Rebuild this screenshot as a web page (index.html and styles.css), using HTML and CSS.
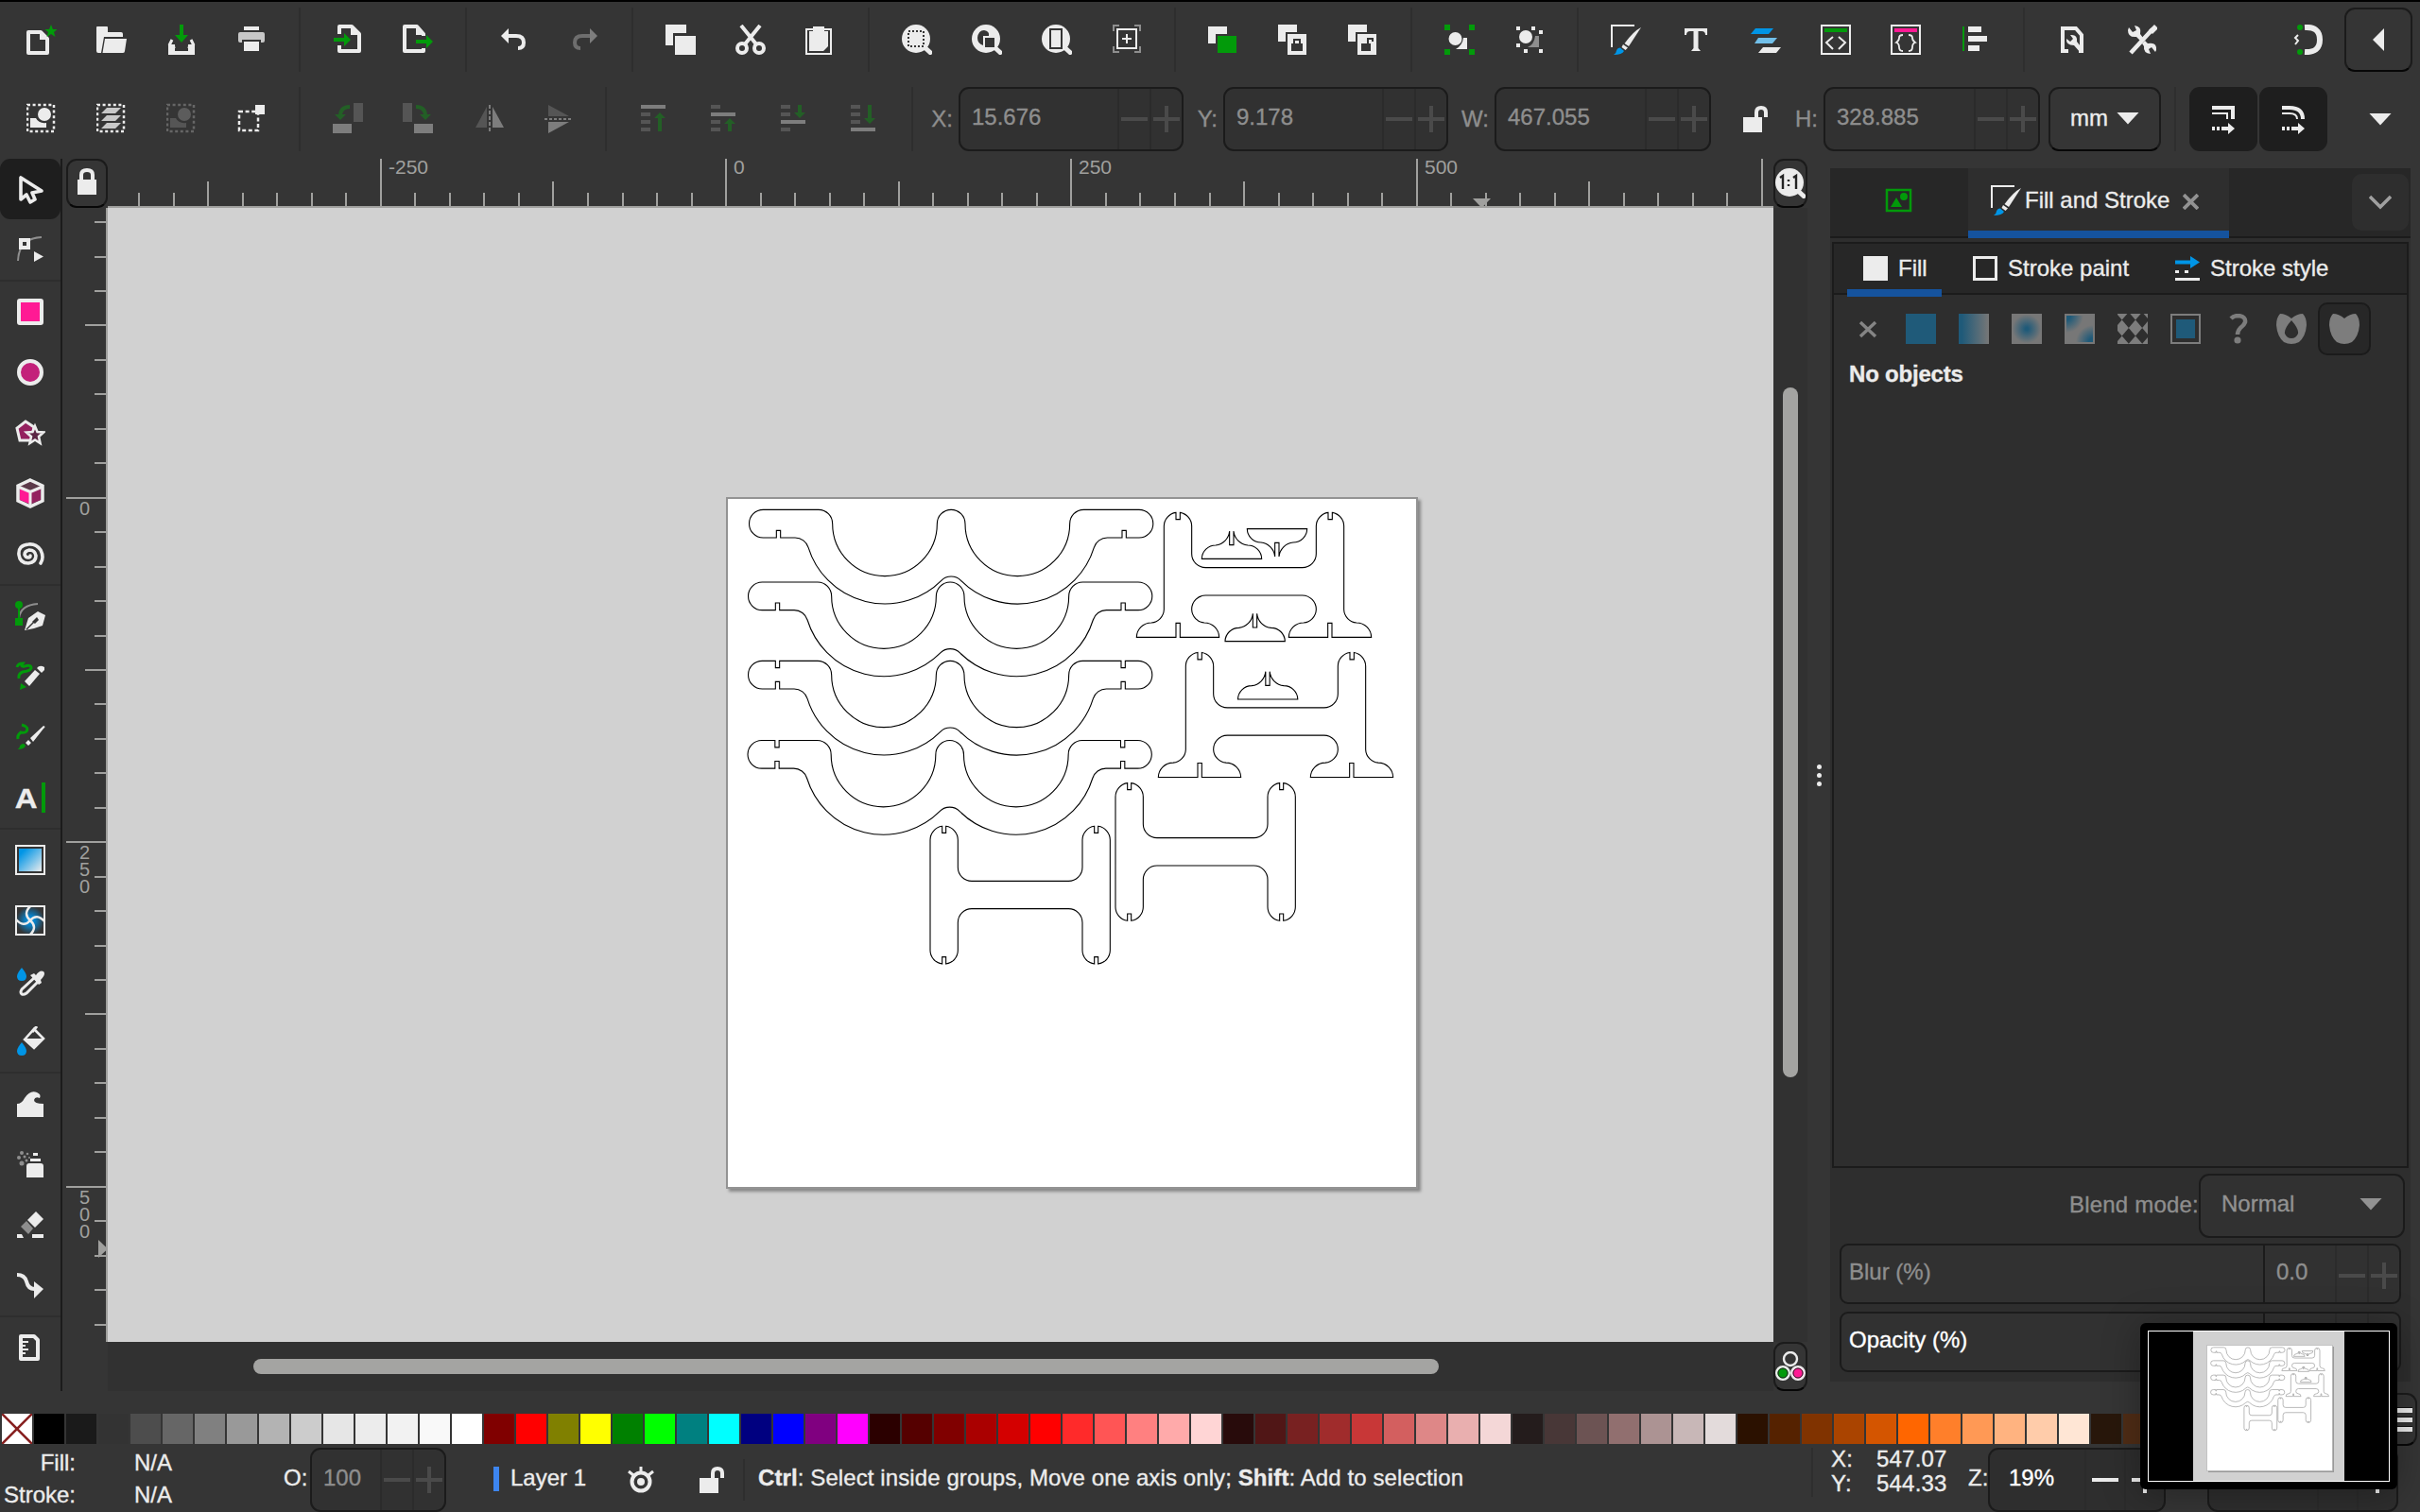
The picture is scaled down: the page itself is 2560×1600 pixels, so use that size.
FILE: index.html
```html
<!DOCTYPE html>
<html lang="en">
<head>
<meta charset="utf-8">
<title>Drawing - Inkscape</title>
<link rel="stylesheet" href="styles.css">
</head>
<body>
<svg class="defs" width="0" height="0" aria-hidden="true">
  <defs>
    <path id="wave" d="M44 0H220A44 45 0 0 1 264 45A166 166 0 0 0 596 45A44.5 45 0 0 1 685 45A166 166 0 0 0 1017 45A44 45 0 0 1 1061 0H1237A44.5 44.5 0 0 1 1237 89H1196V66H1183V89H1136A44 44 0 0 0 1094 120A254 254 0 0 1 671.6 224.8A44 44 0 0 0 609.4 224.8A254 254 0 0 1 187.3 120A44 44 0 0 0 145.3 89H99V66H86V89H44A44.5 44.5 0 0 1 44 0Z"/>
    <path id="wave-notched" d="M44 0H86V22H99V0H220A44 45 0 0 1 264 45A166 166 0 0 0 596 45A44.5 45 0 0 1 685 45A166 166 0 0 0 1017 45A44 45 0 0 1 1061 0H1183V22H1196V0H1237A44.5 44.5 0 0 1 1237 89H1196V66H1183V89H1136A44 44 0 0 0 1094 120A254 254 0 0 1 671.6 224.8A44 44 0 0 0 609.4 224.8A254 254 0 0 1 187.3 120A44 44 0 0 0 145.3 89H99V66H86V89H44A44.5 44.5 0 0 1 44 0Z"/>
    <path id="brace" d="M0 44A44 44 0 0 1 38 0V21H50V0A44 44 0 0 1 88 44V130A44 44 0 0 0 132 174H439A44 44 0 0 0 483 130V44A44 44 0 0 1 521 0V21H533V0A44 44 0 0 1 571 44V393A44 44 0 0 1 533 437V415H521V437A44 44 0 0 1 483 393V306A44 44 0 0 0 439 262H132A44 44 0 0 0 88 306V393A44 44 0 0 1 50 437V415H38V437A44 44 0 0 1 0 393Z"/>
    <path id="stand" d="M87 44A44 44 0 0 1 125 0V22H138V0A44 44 0 0 1 175 44V131A44 44 0 0 0 219 175H526A44 44 0 0 0 570 131V44A44 44 0 0 1 608 0V22H621V0A44 44 0 0 1 658 44V308A44 44 0 0 0 698 350A47 47 0 0 1 745 396H620V351H607V396H483A47 47 0 0 1 530 350A44 44 0 0 0 570 308A44.5 44.5 0 0 0 526 263H219A44.5 44.5 0 0 0 175 308A44 44 0 0 0 215 350A47 47 0 0 1 262 396H138V351H125V396H0A47 47 0 0 1 47 350A44 44 0 0 0 87 308Z"/>
    <path id="foot" d="M0 88A44 44 0 0 1 44 45A50 50 0 0 0 88 0V44H101V0A50 50 0 0 0 146 45A44 44 0 0 1 190 88Z"/>
    <g id="parts">
      <use href="#wave" x="98" y="58"/>
      <use href="#wave" x="95" y="288"/>
      <use href="#wave-notched" x="95" y="538"/>
      <use href="#wave-notched" x="93.5" y="790.5"/>
      <use href="#brace" x="672" y="1063"/>
      <use href="#brace" x="1260" y="926"/>
      <use href="#stand" x="1327" y="67"/>
      <use href="#stand" x="1396" y="511.500"/>
      <use href="#foot" x="1534" y="126"/>
      <use href="#foot" x="1608" y="388"/>
      <use href="#foot" x="1648.500" y="572"/>
      <use href="#foot" transform="translate(1678 207) scale(1 -1)"/>
    </g>
    <linearGradient id="g-lin" x1="0" y1="0" x2="1" y2="1"><stop offset="0.15" stop-color="#0095e6"/><stop offset="1" stop-color="#ececec"/></linearGradient>
    <radialGradient id="g-mesh"><stop offset="0" stop-color="#0095e6"/><stop offset="0.35" stop-color="#0a7fc4"/><stop offset="1" stop-color="#353535"/></radialGradient>
    <linearGradient id="p-lin"><stop offset="0.1" stop-color="#1f5a79"/><stop offset="1" stop-color="#777"/></linearGradient>
    <radialGradient id="p-rad"><stop offset="0.1" stop-color="#1f5a79"/><stop offset="0.95" stop-color="#777"/></radialGradient>
    <radialGradient id="p-corner"><stop offset="0.25" stop-color="#1f5a79"/><stop offset="1" stop-color="#777"/></radialGradient>
    <path id="diamond" d="M0 -8.400L7.200 0L0 8.400L-7.200 0Z"/>
    <symbol id="i-brush" viewBox="0 0 32 32"><path d="M1 24V1H25" fill="none" stroke="#ececec" stroke-width="2"/><path d="M32 3L19 23L14.500 20Q24 7 32 3Z" fill="#ececec"/><path d="M13 21L18 24.500L15.500 27L11.500 24Z" fill="#ececec"/><path d="M10 24.500L14 28Q12 32 3 32Q6 30 6 27.500Q7 24.500 10 24.500Z" fill="#0095e6"/></symbol>
    <symbol id="i-zoom" viewBox="0 0 32 32"><ellipse cx="15" cy="15" rx="15" ry="15" fill="#ececec"/><path d="M24 24L30 29.500" stroke="#ececec" stroke-width="5" stroke-linecap="round"/></symbol>
    <symbol id="i-unlock" viewBox="0 0 32 32"><path d="M3 14H23V30H3Z" fill="#ececec"/><path d="M17 14V9Q17 4 22 4T27 9V14" fill="none" stroke="#ececec" stroke-width="4"/></symbol>
    <symbol id="i-dash" viewBox="0 0 32 32"><rect x="1" y="2" width="28" height="28" fill="none" stroke="currentColor" stroke-width="2.500" stroke-dasharray="3 2.600"/></symbol>
  </defs>
</svg>

<header class="bar commands">
  <div class="group">
    <i><svg viewBox="0 0 32 32"><path d="M2 8H15L22 15V30H2Z" fill="none" stroke="#ececec" stroke-width="4" stroke-linejoin="round"/><path d="M14 7V16H23Z" fill="#ececec"/><path d="M26 0L28 5L32.500 5L29 8L30.500 13L26 10L21.500 13L23 8L19.500 5L24 5Z" fill="#029a0a"/></svg></i>
    <i><svg viewBox="0 0 32 32"><path d="M0 3Q0 2 1 2H11Q12 2 12 3V8H26Q28 8 28 10V13H8L5 30H2Q0 30 0 28Z" fill="#ececec"/><path d="M9 15H32L30 28Q30 30 28 30H6.500Z" fill="#ececec"/></svg></i>
    <i><svg viewBox="0 0 32 32"><path d="M14 0H18V11H23L16 19L9 11H14Z" fill="#029a0a"/><path d="M6 16L3 22M26 16L29 22" stroke="#ececec" stroke-width="3"/><path d="M2 21H9Q9 26 11 26H21Q23 26 23 21H30V32H2Z" fill="#ececec"/><path d="M10 25V27H22V25" fill="none" stroke="#353535" stroke-width="2"/></svg></i>
    <i><svg viewBox="0 0 32 32"><path d="M8 2H24V6H8Z" fill="#ececec"/><path d="M4 8H28Q30 8 30 10V17Q30 19 28 19H26V16H6V19H4Q2 19 2 17V10Q2 8 4 8Z" fill="#c8c8c8"/><path d="M8 18H24V28H8Z" fill="#ececec"/></svg></i>
  </div><b class="sep"></b>
  <div class="group">
    <i><svg viewBox="0 0 32 32"><path d="M7 10V2H20L28 10V28H7V22" fill="none" stroke="#ececec" stroke-width="4" stroke-linejoin="round"/><path d="M19 2V11H28Z" fill="#ececec"/><path d="M1 14H12V9L19 16L12 23V18H1Z" fill="#029a0a"/></svg></i>
    <i><svg viewBox="0 0 32 32"><path d="M22 12V10L15 2H2V28H22V25" fill="none" stroke="#ececec" stroke-width="4" stroke-linejoin="round"/><path d="M14 2V11H23Z" fill="#ececec"/><path d="M14 16H25V11L32 18L25 25V20H14Z" fill="#029a0a"/></svg></i>
  </div><b class="sep"></b>
  <div class="group">
    <i><svg viewBox="0 0 32 32"><path d="M8 12H18Q26 12 26 19Q26 25 20 25" fill="none" stroke="#ececec" stroke-width="4"/><path d="M2 12L10 4V20Z" fill="#ececec"/></svg></i>
    <i><svg viewBox="0 0 32 32"><path d="M24 12H14Q6 12 6 19Q6 25 12 25" fill="none" stroke="#6e6e6e" stroke-width="4"/><path d="M30 12L22 4V20Z" fill="#7d7d7d"/></svg></i>
  </div><b class="sep"></b>
  <div class="group">
    <i><svg viewBox="0 0 32 32"><path d="M0 0H22V9H8V22H0Z" fill="#ececec"/><path d="M10 12H32V32H10Z" fill="#ececec"/></svg></i>
    <i><svg viewBox="0 0 32 32"><path d="M6 1L23 22M26 1L9 22" stroke="#ececec" stroke-width="4"/><circle cx="7" cy="25" r="5" fill="none" stroke="#ececec" stroke-width="4"/><circle cx="25" cy="25" r="5" fill="none" stroke="#ececec" stroke-width="4"/></svg></i>
    <i><svg viewBox="0 0 32 32"><path d="M8 5H1V31H27V5H20" fill="none" stroke="#ececec" stroke-width="2"/><path d="M8 2H20V7H24V23L19 28H4V7H8Z" fill="#ececec"/></svg></i>
  </div><b class="sep"></b>
  <div class="group">
    <i><svg viewBox="0 0 32 32"><use href="#i-zoom"/><rect x="7" y="7" width="16" height="16" fill="none" stroke="#353535" stroke-width="2" stroke-dasharray="2 2"/></svg></i>
    <i><svg viewBox="0 0 32 32"><use href="#i-zoom"/><path d="M12 22Q6 20 6 14Q7 6 13 6Q19 7 18 12H12Z" fill="#353535"/><path d="M14 14H24V24H14Z" fill="#353535"/></svg></i>
    <i><svg viewBox="0 0 32 32"><use href="#i-zoom"/><rect x="9" y="5" width="12" height="20" fill="none" stroke="#353535" stroke-width="2"/></svg></i>
    <i><svg viewBox="0 0 32 32"><path d="M2 7V1H8M24 1H30V7M30 23V29H24M8 29H2V23" fill="none" stroke="#8e8e8e" stroke-width="2"/><rect x="6" y="5" width="20" height="20" fill="none" stroke="#ececec" stroke-width="2"/><path d="M16 10V20M11 15H21" stroke="#ececec" stroke-width="2"/></svg></i>
  </div><b class="sep"></b>
  <div class="group">
    <i><svg viewBox="0 0 32 32"><path d="M0 2H20V10H8V20H0Z" fill="#ececec"/><path d="M10 12H30V30H10Z" fill="#029a0a"/></svg></i>
    <i><svg viewBox="0 0 32 32"><path d="M0 0H20V8H8V18H0Z" fill="#ececec"/><path d="M10 10H30V32H10Z" fill="#ececec"/><path d="M14 20H26V28H14Z" fill="#353535"/><path d="M17 20V16H23V20" fill="none" stroke="#353535" stroke-width="2"/></svg></i>
    <i><svg viewBox="0 0 32 32"><path d="M0 0H20V8H8V18H0Z" fill="#ececec"/><path d="M10 10H30V32H10Z" fill="#ececec"/><path d="M14 20H24V28H14Z" fill="#353535"/><path d="M21 20V15H26V18" fill="none" stroke="#353535" stroke-width="2"/></svg></i>
  </div><b class="sep"></b>
  <div class="group">
    <i><svg viewBox="0 0 32 32"><path d="M0 0H6V6H0ZM26 0H32V6H26ZM0 26H6V32H0ZM26 26H32V32H26Z" fill="#029a0a"/><circle cx="11.500" cy="15" r="7" fill="#ececec"/><path d="M20 14H24V26H12Q19 22 20 14Z" fill="#ececec"/></svg></i>
    <i><svg viewBox="0 0 32 32"><path d="M2 2H6V6H2ZM18 2H22V6H18ZM26 6H30V10H26ZM2 20H6V24H2ZM10 26H14V30H10ZM26 26H30V30H26Z" fill="#ececec"/><circle cx="12" cy="13" r="7" fill="#ececec"/><path d="M22 12H26V24H14Q21 21 22 12Z" fill="#8e8e8e"/></svg></i>
  </div><b class="sep"></b>
  <div class="group">
    <i><svg><use href="#i-brush"/></svg></i>
    <i><svg viewBox="0 0 32 32"><path d="M4 4H28V11H26Q26 7 22 7H18.500V25L21 28H11L13.500 25V7H10Q6 7 6 11H4Z" fill="#ececec"/></svg></i>
    <i><svg viewBox="0 0 32 32"><path d="M5 4H24L19 10H0Z" fill="#0095e6"/><path d="M8 14H28L23 20H4Z" fill="#72c0ea"/><path d="M13 24H32L27 30H8Z" fill="#ececec"/></svg></i>
    <i><svg viewBox="0 0 32 32"><rect x="1" y="1" width="30" height="30" fill="none" stroke="#ececec" stroke-width="2"/><path d="M4 4H28V8H4Z" fill="#029a0a"/><path d="M13 13L6 19L13 26M19 13L26 19L19 26" fill="none" stroke="#ececec" stroke-width="2"/></svg></i>
    <i><svg viewBox="0 0 32 32"><rect x="1" y="1" width="30" height="30" fill="none" stroke="#ececec" stroke-width="2"/><path d="M4 4H28V8H4Z" fill="#ff1a94"/><path d="M13 11Q9 11 9 14T6 19Q9 20 9 24T13 28M19 11Q23 11 23 14T26 19Q23 20 23 24T19 28" fill="none" stroke="#ececec" stroke-width="1.800"/></svg></i>
    <i><svg viewBox="0 0 32 32"><path d="M2 2H4V28H2Z" fill="#029a0a"/><path d="M8 2H22V8H8ZM8 12H28V18H8ZM8 22H20V28H8Z" fill="#ececec"/></svg></i>
  </div><b class="sep"></b>
  <div class="group">
    <i><svg viewBox="0 0 32 32"><path d="M12 28H6V4H20L26 11V28H23" fill="none" stroke="#ececec" stroke-width="4"/><path d="M10 15L14 18L17 15L14 11Q22 10 21 18L28 27L25 30L18 22Q9 22 10 15Z" fill="#ececec"/></svg></i>
    <i><svg viewBox="0 0 32 32"><path d="M27 5L4 30" stroke="#ececec" stroke-width="4.500"/><path d="M23 6L29 0L33 4L27 10Z" fill="#ececec"/><path d="M2 3L6 8L10 6L8 1Q16 2 14 10L17 14L14 17L10 13Q1 14 1 6ZM30 29L26 24L23 26L25 31Q17 30 18 23L16 20L19 17L22 20Q32 18 31 27Z" fill="#ececec"/></svg></i>
  </div>
  <span class="fill"></span>
  <svg class="snap" viewBox="0 0 32 32"><path d="M12 3Q28 2 28 16T12 29" fill="none" stroke="#ececec" stroke-width="6"/><circle cx="7" cy="3" r="3" fill="#029a0a"/><circle cx="7" cy="29" r="3" fill="#029a0a"/><path d="M5 11L2 14L5 17L2 21" fill="none" stroke="#ececec" stroke-width="2"/></svg>
  <span class="button snap-more"><svg viewBox="0 0 32 32"><path d="M22 4V28L10 16Z" fill="#ececec"/></svg></span>
</header>

<div class="bar options">
  <div class="group">
    <i class="on"><svg viewBox="0 0 32 32"><use href="#i-dash"/><circle cx="19" cy="12" r="7" fill="#ececec"/><path d="M4 16H10Q13 22 21 21V26H4Z" fill="#ececec"/></svg></i>
    <i class="on"><svg viewBox="0 0 32 32"><use href="#i-dash"/><path d="M11 5H26L20 11H5ZM11 13H26L20 19H5ZM11 21H26L20 27H5Z" fill="#c8c8c8"/></svg></i>
    <i class="off"><svg viewBox="0 0 32 32"><use href="#i-dash"/><circle cx="19" cy="12" r="7" fill="#5c5c5c"/><path d="M4 16H10Q13 22 21 21V26H4Z" fill="#555"/></svg></i>
    <i class="on"><svg viewBox="0 0 32 32"><rect x="3" y="9" width="20" height="20" fill="none" stroke="#ececec" stroke-width="2.500" stroke-dasharray="4 2.600"/><path d="M20 2H30V12H20Z" fill="#ececec"/></svg></i>
  </div><b class="sep"></b>
  <div class="group">
    <i><svg viewBox="0 0 32 32"><path d="M22 0H32V20H22Z" fill="#555"/><path d="M0 22H20V32H0Z" fill="#7d7d7d"/><path d="M18 4Q8 4 8 14" fill="none" stroke="#235f26" stroke-width="4"/><path d="M2 12H14L8 18Z" fill="#235f26"/></svg></i>
    <i><svg viewBox="0 0 32 32"><path d="M0 0H10V20H0Z" fill="#555"/><path d="M12 22H32V32H12Z" fill="#7d7d7d"/><path d="M14 4Q24 4 24 14" fill="none" stroke="#235f26" stroke-width="4"/><path d="M18 12H30L24 18Z" fill="#235f26"/></svg></i>
    <i><svg class="shifted" viewBox="0 0 32 32"><path d="M13 4V26H1Z" fill="#555"/><path d="M19 4V26H31Z" fill="#7d7d7d"/><path d="M16 2V30" stroke="#7d7d7d" stroke-width="2" stroke-dasharray="4 2"/></svg></i>
    <i><svg class="shifted" viewBox="0 0 32 32"><path d="M4 2V14H26Z" fill="#555"/><path d="M4 32V20H26Z" fill="#7d7d7d"/><path d="M0 17H30" stroke="#7d7d7d" stroke-width="2" stroke-dasharray="3 2"/></svg></i>
  </div><b class="sep"></b>
  <div class="group">
    <i><svg viewBox="0 0 32 32"><path d="M2 2H28V6H2Z" fill="#7d7d7d"/><path d="M2 10H12V14H2ZM2 18H12V22H2ZM2 26H12V30H2Z" fill="#555"/><path d="M20 30V16H16L22 10L28 16H24V30Z" fill="#235f26"/></svg></i>
    <i><svg viewBox="0 0 32 32"><path d="M2 10H28V14H2Z" fill="#7d7d7d"/><path d="M2 2H12V6H2ZM2 18H12V22H2ZM2 26H12V30H2Z" fill="#555"/><path d="M20 30V22H16L22 16L28 22H24V30Z" fill="#235f26"/></svg></i>
    <i><svg viewBox="0 0 32 32"><path d="M2 18H28V22H2Z" fill="#7d7d7d"/><path d="M2 2H12V6H2ZM2 10H12V14H2ZM2 26H12V30H2Z" fill="#555"/><path d="M20 2V10H16L22 16L28 10H24V2Z" fill="#235f26"/></svg></i>
    <i><svg viewBox="0 0 32 32"><path d="M2 26H28V30H2Z" fill="#7d7d7d"/><path d="M2 2H12V6H2ZM2 10H12V14H2ZM2 18H12V22H2Z" fill="#555"/><path d="M20 2V16H16L22 22L28 16H24V2Z" fill="#235f26"/></svg></i>
  </div><b class="sep"></b>
  <label class="lx">X:</label><span class="spin wide dim"><em>15.676</em><u class="minus"></u><u class="plus"></u></span>
  <label class="ly">Y:</label><span class="spin wide dim"><em>9.178</em><u class="minus"></u><u class="plus"></u></span>
  <label class="lw">W:</label><span class="spin mid dim"><em>467.055</em><u class="minus"></u><u class="plus"></u></span>
  <svg class="ratio" viewBox="0 0 32 32"><use href="#i-unlock"/></svg>
  <label class="lh">H:</label><span class="spin mid dim"><em>328.885</em><u class="minus"></u><u class="plus"></u></span>
  <span class="button units">mm<s class="caret"></s></span><b class="sep last"></b>
  <span class="toggle"><svg viewBox="0 0 32 32"><path d="M4 4H26V16" fill="none" stroke="#ececec" stroke-width="4"/><path d="M4 10H20V16" fill="none" stroke="#ececec" stroke-width="2"/><path d="M4 24H7V28H4ZM9 24H12V28H9ZM14 24H21V20L28 26L21 32V28H14Z" fill="#ececec"/></svg></span>
  <span class="toggle"><svg viewBox="0 0 32 32"><path d="M4 4H12Q26 4 26 16" fill="none" stroke="#ececec" stroke-width="4"/><path d="M4 10H12Q20 10 20 16" fill="none" stroke="#ececec" stroke-width="2"/><path d="M4 24H7V28H4ZM9 24H12V28H9ZM14 24H21V20L28 26L21 32V28H14Z" fill="#ececec"/></svg></span>
  <s class="caret more"></s>
</div>

<main class="work">
  <nav class="tools">
    <i class="active"><svg viewBox="0 0 32 32"><path d="M6 4V27L12 22L16 30L21 27L18 20L28 18Z" fill="none" stroke="#ececec" stroke-width="3.600" stroke-linejoin="round"/></svg></i>
    <i><svg viewBox="0 0 32 32"><path d="M3 28Q4 4 28 3" fill="none" stroke="#8e8e8e" stroke-width="2"/><rect x="6" y="6" width="8" height="8" fill="#353535" stroke="#ececec" stroke-width="4"/><path d="M20 18L30 23.500L20 29Z" fill="#ececec"/></svg></i>
    <hr>
    <i><svg viewBox="0 0 32 32"><rect x="4" y="4" width="24" height="24" rx="1" fill="#ff1a94" stroke="#ececec" stroke-width="4"/></svg></i>
    <i><svg viewBox="0 0 32 32"><circle cx="16" cy="16" r="12" fill="#c3207a" stroke="#ececec" stroke-width="4"/></svg></i>
    <i><svg viewBox="0 0 32 32"><path d="M11 4L20 10L17 24H5L2 11Z" fill="#94215f" stroke="#ececec" stroke-width="3"/><path d="M21 9L23.500 15L30 15.500L25 20L26.500 27L21 23.500L15.500 27L17 20L12 15.500L18.500 15Z" fill="#5c2645" stroke="#ececec" stroke-width="2.600"/></svg></i>
    <i><svg viewBox="0 0 32 32"><path d="M16 2L29 8V24L16 30L3 24V8Z" fill="#5c3a4a" stroke="#ececec" stroke-width="3.500"/><path d="M5 11L15 15V27L5 23Z" fill="#ff1a94"/><path d="M27 11L17 15V27L27 23Z" fill="#94215f"/><path d="M3 9L16 14.500L29 9M16 14V29" fill="none" stroke="#ececec" stroke-width="3"/></svg></i>
    <i><svg viewBox="0 0 32 32"><path d="M27 26Q31 20 27 12Q22 5 14 6Q3 7 4 17Q5 26 14 26Q22 25 22 18Q21 12 15 12Q10 13 10 17Q11 20 14 20Q16 20 16 18" fill="none" stroke="#ececec" stroke-width="3.600" stroke-linecap="round"/></svg></i>
    <hr>
    <i><svg viewBox="0 0 32 32"><path d="M4 18Q6 4 24 3" fill="none" stroke="#8e8e8e" stroke-width="2"/><circle cx="4" cy="4" r="4" fill="#029a0a"/><path d="M3 4H5V18H8V26H0V18H3Z" fill="#029a0a"/><path d="M10 31L14 18L24 11L32 15L29 26L20 29Z" fill="#ececec"/><path d="M12 30L20 22" stroke="#353535" stroke-width="1.500"/><path d="M18 22L23 17L25 20L21 24Z" fill="#353535"/></svg></i>
    <i><svg viewBox="0 0 32 32"><path d="M2 6Q3 2 8 2Q5 6 10 5Q17 3 17 7Q16 10 8 11Q3 13 4 18" fill="none" stroke="#029a0a" stroke-width="3"/><path d="M6 23L12 27L5 30Z" fill="#029a0a"/><path d="M10 21L21 9L26 13L15 26Z" fill="#ececec"/><path d="M23 7Q26 3 31 6L31 9L28 12Z" fill="#ececec"/></svg></i>
    <i><svg viewBox="0 0 32 32"><path d="M7 3Q15 5 12 10Q10 12 6 11Q2 14 3 18" fill="none" stroke="#029a0a" stroke-width="3"/><path d="M2 29Q5 28 5 25Q9 21 11 25Q10 29 2 29Z" fill="#029a0a"/><path d="M11 22L14 19L17 22L14 25ZM16 17L30 4Q33 5 30 7L19 21Z" fill="#ececec"/></svg></i>
    <i class="text-tool"><strong>A</strong><u></u></i>
    <hr>
    <i><svg viewBox="0 0 32 32"><rect x="1" y="1" width="30" height="30" fill="none" stroke="#ececec" stroke-width="2"/><rect x="4" y="4" width="24" height="24" fill="url(#g-lin)"/></svg></i>
    <i><svg viewBox="0 0 32 32"><rect x="1" y="1" width="30" height="30" fill="url(#g-mesh)" stroke="#ececec" stroke-width="2"/><path d="M16 1Q8 9 16 16T16 31M1 15Q9 24 16 16T31 17" fill="none" stroke="#ececec" stroke-width="2.500"/></svg></i>
    <i><svg viewBox="0 0 32 32"><path d="M7 2Q12 8 12 11Q12 16 7 16T2 11Q2 8 7 2Z" fill="#0095e6"/><path d="M20 13L7 25Q5 28 7 30Q9 31 12 29L24 17" fill="none" stroke="#ececec" stroke-width="3"/><path d="M16 10L20 8L22 10Q26 4 30 6Q33 9 27 15L28 18L25 20Z" fill="#ececec"/></svg></i>
    <i><svg viewBox="0 0 32 32"><path d="M7 17Q12 23 12 26Q12 31 7 31T2 26Q2 23 7 17Z" fill="#0095e6"/><path d="M10 14L20 3L30 13L20 23Z" fill="none" stroke="#ececec" stroke-width="2.600"/><path d="M10 13H30L21 23Z" fill="#ececec"/><path d="M23 0L18 6" stroke="#ececec" stroke-width="3"/></svg></i>
    <hr>
    <i><svg viewBox="0 0 32 32"><path d="M2 16Q7 16 10 10Q16 1 23 4Q28 6 26 10Q21 8 20 12Q20 16 30 16V30H2Z" fill="#ececec"/></svg></i>
    <i><svg viewBox="0 0 32 32"><path d="M19 4H24V7H19ZM16 10H27V13H16ZM12 18Q12 15 15 15H27Q30 15 30 18V30H12Z" fill="#ececec"/><g fill="#8e8e8e"><circle cx="7" cy="4" r="2"/><circle cx="4" cy="9" r="2"/><circle cx="7" cy="15" r="2.500"/><circle cx="10" cy="8" r="1.500"/><circle cx="13" cy="5" r="1.300"/><circle cx="12" cy="12" r="1.500"/><circle cx="15" cy="9" r="1"/></g></svg></i>
    <i><svg viewBox="0 0 32 32"><path d="M22 2L30 10L21 19L13 11Z" fill="#ececec"/><path d="M12 12L19 20L14 26L6 18Z" fill="#8e8e8e"/><path d="M2 26H7L9 30H2ZM18 26H30V30H18Z" fill="#ececec"/></svg></i>
    <i><svg viewBox="0 0 32 32"><path d="M2 5Q10 5 12 12Q14 21 22 20" fill="none" stroke="#ececec" stroke-width="4"/><path d="M20 12L30 20L20 30Z" fill="#ececec"/></svg></i>
    <hr>
    <i><svg viewBox="0 0 32 32"><path d="M6 4H20L24 8V28H6Z" fill="none" stroke="#ececec" stroke-width="4" stroke-linejoin="round"/><path d="M6 10H14M6 14H11M6 18H14M6 22H11" stroke="#ececec" stroke-width="2"/></svg></i>
  </nav>

  <section class="desk">
    <span class="button corner lock"><svg viewBox="0 0 32 32"><path d="M6 14H26V30H6Z" fill="#ececec"/><path d="M10 14V9Q10 4 16 4T22 9V14" fill="none" stroke="#ececec" stroke-width="4"/></svg></span>
    <svg class="ruler-h" id="ruler-h" width="1762" height="52"></svg>
    <span class="button corner zoom11"><svg viewBox="0 0 32 32"><use href="#i-zoom"/><path d="M5 10L8 8V22M19 10L22 8V22M14 12V14M14 17V19" fill="none" stroke="#222" stroke-width="2.400"/></svg></span>
    <svg class="ruler-v" id="ruler-v" width="44" height="1200"></svg>
    <div class="canvas">
      <div class="page"></div>
      <svg class="drawing" width="1762" height="1200"><use href="#parts" transform="translate(646 300) scale(.33333)"/></svg>
    </div>
    <div class="vscroll"><span></span></div>
    <div class="blank"></div>
    <div class="hscroll"><span></span></div>
    <span class="button corner cms"><svg viewBox="0 0 32 32"><circle cx="16" cy="8" r="7" fill="none" stroke="#ececec" stroke-width="2.400"/><circle cx="8" cy="23" r="6.800" fill="#029a0a" stroke="#ececec" stroke-width="2.400"/><circle cx="24" cy="23" r="6.800" fill="#ff1a94" stroke="#ececec" stroke-width="2.400"/><circle cx="8" cy="23" r="5" fill="none" stroke="#222"/><circle cx="24" cy="23" r="5" fill="none" stroke="#222"/></svg></span>
  </section>

  <div class="grip"><span></span><span></span><span></span></div>

  <aside class="dock">
    <div class="tabs">
      <span class="tab export"><svg viewBox="0 0 32 32"><rect x="4" y="5" width="25" height="22" fill="none" stroke="#029a0a" stroke-width="2.500"/><path d="M8 23L14 13L20 23Z" fill="#029a0a"/><circle cx="22" cy="12" r="4" fill="#029a0a"/></svg></span>
      <span class="tab current"><svg><use href="#i-brush"/></svg>Fill and Stroke<svg class="close" viewBox="0 0 16 16"><path d="M1 1L15 15M15 1L1 15" stroke="#929292" stroke-width="3.500"/></svg></span>
      <span class="fill"></span>
      <span class="tab-menu"><svg viewBox="0 0 24 16"><path d="M1 2L12 13L23 2" fill="none" stroke="#a0a0a0" stroke-width="3.500"/></svg></span>
    </div>
    <div class="pane">
      <div class="subtabs">
        <span class="sub now"><svg viewBox="0 0 26 26"><path d="M0 0H26V26H0Z" fill="#ececec"/></svg>Fill</span>
        <span class="sub paint"><svg viewBox="0 0 26 26"><rect x="1.500" y="1.500" width="23" height="23" fill="none" stroke="#ececec" stroke-width="3"/></svg>Stroke paint</span>
        <span class="sub style"><svg viewBox="0 0 26 26"><path d="M0 4.500H16V0L26 6.500L16 13V8.500H0Z" fill="#0095e6"/><path d="M0 15H4V18H0ZM10 15H14V18H10ZM0 23H26V26H0Z" fill="#ececec"/></svg>Stroke style</span>
      </div>
      <div class="paints">
        <i><svg viewBox="0 0 32 32"><path d="M8 9L24 24M24 9L8 24" stroke="#858585" stroke-width="3.400"/></svg></i>
        <i><svg viewBox="0 0 32 32"><path d="M0 0H32V32H0Z" fill="#1f5a79"/></svg></i>
        <i><svg viewBox="0 0 32 32"><path d="M0 0H32V32H0Z" fill="url(#p-lin)"/></svg></i>
        <i><svg viewBox="0 0 32 32"><path d="M0 0H32V32H0Z" fill="url(#p-rad)"/></svg></i>
        <i><svg viewBox="0 0 32 32"><path d="M0 0H32V32H0Z" fill="#777"/><svg x="2" y="2" width="28" height="28"><circle r="18" fill="url(#p-corner)"/><circle cx="28" cy="28" r="18" fill="url(#p-corner)"/></svg></svg></i>
        <i><svg viewBox="0 0 32 32"><g fill="#7d7d7d"><use href="#diamond" x="4.700" y="-1.800"/><use href="#diamond" x="19" y="-1.800"/><use href="#diamond" x="33.300" y="-1.800"/><use href="#diamond" x="4.700" y="15"/><use href="#diamond" x="19" y="15"/><use href="#diamond" x="33.300" y="15"/><use href="#diamond" x="4.700" y="31.800"/><use href="#diamond" x="19" y="31.800"/><use href="#diamond" x="33.300" y="31.800"/></g></svg></i>
        <i><svg viewBox="0 0 32 32"><rect x="1" y="1" width="30" height="30" fill="none" stroke="#7d7d7d" stroke-width="2"/><path d="M6 6H26V26H6Z" fill="#1f5a79"/></svg></i>
        <i><svg viewBox="0 0 32 32"><path d="M8 5Q11 2 16 2Q24 3 23 9Q22 12 18 15Q15 18 15 22" fill="none" stroke="#7d7d7d" stroke-width="4.500"/><circle cx="15" cy="28" r="3.600" fill="#7d7d7d"/></svg></i>
        <i><svg viewBox="0 0 32 32"><path fill-rule="evenodd" d="M16 5Q22 0 28 0Q32 4 32 12Q31 24 24 30Q16 34 8 30Q1 24 0 12Q0 4 4 0Q10 0 16 5ZM16 7Q8 16 9 21Q11 26 16 26T23 21Q24 16 16 7Z" fill="#7d7d7d"/></svg></i>
        <i class="rule"><svg viewBox="0 0 32 32"><path d="M16 5Q22 0 28 0Q32 4 32 12Q31 24 24 30Q16 34 8 30Q1 24 0 12Q0 4 4 0Q10 0 16 5Z" fill="#7d7d7d"/></svg></i>
      </div>
      <h2>No objects</h2>
    </div>
    <div class="blend"><span>Blend mode:</span><span class="select">Normal<s class="caret"></s></span></div>
    <div class="slider dim"><span>Blur (%)</span><em>0.0</em><u class="minus"></u><u class="plus"></u></div>
    <div class="slider"><span>Opacity (%)</span><em>100.0</em><u class="minus"></u><u class="plus"></u></div>
  </aside>
</main>

<div class="palette">
  <div class="swatches" id="swatches"><span class="none"><svg viewBox="0 0 32 32"><path d="M0 0L32 32M32 0L0 32" stroke="#872020" stroke-width="2.600"/></svg></span></div>
  <span class="button menu"><b></b><b></b><b></b></span>
</div>

<footer class="status">
  <dl><dt>Fill:</dt><dd>N/A</dd><dt>Stroke:</dt><dd>N/A</dd></dl>
  <label class="lo">O:</label><span class="spin opacity dim"><em>100</em><u class="minus"></u><u class="plus"></u></span>
  <span class="layer">Layer 1</span>
  <svg class="eye" viewBox="0 0 32 32"><circle cx="16" cy="19" r="9.500" fill="none" stroke="#ececec" stroke-width="4"/><circle cx="16" cy="19" r="4" fill="#ececec"/><path d="M16 3V9M3 8L8 12M29 8L24 12" stroke="#ececec" stroke-width="3"/></svg>
  <svg class="layer-lock" viewBox="0 0 32 32"><use href="#i-unlock"/></svg>
  <b class="line"></b>
  <p class="hint"><strong>Ctrl</strong>: Select inside groups, Move one axis only; <strong>Shift</strong>: Add to selection</p>
  <b class="line tall"></b>
  <dl class="coords"><dt>X:</dt><dd>547.07</dd><dt>Y:</dt><dd>544.33</dd></dl>
  <label class="lz">Z:</label><span class="spin zoom"><em>19%</em><u class="minus"></u><u class="plus"></u></span>
  <span class="spin rotate"><em></em><u class="minus"></u><u class="plus"></u></span>
</footer>

<div class="preview">
  <svg width="256" height="160" viewBox="0 0 256 160"><path d="M48 0H208V160H48Z" fill="#d1d1d1"/><path d="M64 17H197V150H64Z" fill="#999"/><path d="M62.500 15.500H195.500V148.500H62.500Z" fill="#fff" stroke="#aaa" stroke-width=".6"/><use href="#parts" class="mini" transform="translate(60.900 14.300) scale(.061)"/><rect x=".5" y=".5" width="255" height="159" fill="none" stroke="#fff"/></svg>
</div>
<script src="script.js"></script>
</body>
</html>
```
FILE: styles.css
```css
* { box-sizing: border-box; }
body {
  margin: 0; width: 2560px; height: 1600px; overflow: hidden; position: relative;
  display: flex; flex-direction: column;
  background: #353535; color: #ececec;
  font: 24px/28px "Liberation Sans", Arial, sans-serif;
  -webkit-text-stroke: .35px;
}
svg { display: block; flex: none; }
i, em { font-style: normal; }
u, s { text-decoration: none; }
.defs { position: absolute; }
.fill { flex: 1; }
strong { font-weight: bold; }

/* toolbars */
.bar { display: flex; align-items: center; height: 84px; padding-left: 7px; flex: none; }
.commands { border-top: 2px solid #000; padding-bottom: 2px; }
.group { display: flex; }
.group i { width: 74px; height: 32px; display: flex; justify-content: center; }
.group svg { width: 32px; height: 32px; }
.options .group { padding-bottom: 2px; }
.group .shifted { margin-left: 3px; }
.sep { width: 28px; height: 68px; background: linear-gradient(#2e2e2e, #2e2e2e) center / 2px 100% no-repeat; }
.sep.last { width: 30px; }
.on { color: #ececec; }
.off { color: #666; }
.button {
  display: flex; align-items: center; justify-content: center; flex: none;
  border: 2px solid #1b1b1b; border-bottom-color: #070707; border-radius: 11px; background: #353535;
}
.snap { width: 32px; height: 32px; margin-right: 22px; }
.snap-more { width: 72px; height: 68px; margin-right: 8px; }
.snap-more svg { width: 32px; height: 32px; }
.options label { color: #8e8e8e; text-align: right; padding-right: 6px; }
.lx { width: 35px; }
.ly { width: 42px; }
.lw { width: 49px; }
.lh { width: 38px; }
.ratio { width: 32px; height: 32px; margin: 0 7px 0 31px; }
.ratio + .lh { width: 49px; }
.spin {
  display: flex; height: 68px; flex: none; border: 2px solid #1b1b1b; border-radius: 11px;
  background: #313131; line-height: 60px; overflow: hidden;
}
.spin em { flex: 1; padding-left: 12px; }
.dim { color: #8e8e8e; }
.wide { width: 238px; }
.mid { width: 229px; }
.minus, .plus { width: 34px; border-left: 2px solid #2b2b2b; background: linear-gradient(#ececec, #ececec) center 30px / 28px 4px no-repeat; }
.plus { background: linear-gradient(#ececec, #ececec) center 30px / 28px 4px no-repeat, linear-gradient(#ececec, #ececec) center 18px / 4px 28px no-repeat; }
.dim .minus { background-image: linear-gradient(#4a4a4a, #4a4a4a); }
.dim .plus { background-image: linear-gradient(#4a4a4a, #4a4a4a), linear-gradient(#4a4a4a, #4a4a4a); }
.units { width: 119px; height: 68px; margin-left: 9px; gap: 9px; padding-bottom: 2px; }
.caret { width: 24px; height: 13px; background: currentColor; clip-path: polygon(0 0, 100% 0, 50% 100%); }
.toggle { width: 72px; height: 68px; margin-right: 2px; border-radius: 11px; background: #1e1e1e; display: flex; align-items: center; justify-content: center; flex: none; }
.toggle svg { width: 32px; height: 32px; }
.more { margin-left: 42px; }

/* work area */
.work { display: flex; height: 1304px; flex: none; }
.tools { width: 66px; border-right: 2px solid #1b1b1b; flex: none; }
.tools i { display: flex; width: 64px; height: 64px; align-items: center; justify-content: center; }
.tools i svg { width: 32px; height: 32px; }
.tools hr { margin: 0; border: 0; height: 2px; background: #2e2e2e; }
.tools .active { background: #1e1e1e; border-radius: 11px; }
.text-tool strong { font: bold 30px/32px "Liberation Sans", Arial, sans-serif; width: 28px; transform: scaleX(1.1); padding-left: 1px; margin-top: 2px; }
.text-tool u { width: 4px; height: 32px; background: #029a0a; }
.desk { display: grid; grid-template: 52px 1200px 52px / 44px 1762px 36px; margin-left: 4px; flex: none; }
.corner svg { width: 32px; height: 32px; flex: none; }
.lock svg { margin-top: -4px; }
.ruler-h, .ruler-v { fill: #a0a09e; font-size: 21px; }
.ruler-v { font-size: 20px; }
.canvas { position: relative; background: #d1d1d1; }
.page { position: absolute; left: 654px; top: 306px; width: 732px; height: 732px; background: #fff; border: 2px solid #939393; box-shadow: 3px 3px 3px rgba(0, 0, 0, .35); }
.drawing { position: absolute; left: 0; top: 0; fill: none; stroke: #000; stroke-width: 3.3; }
.vscroll, .hscroll { background: #313131; }
.vscroll { padding: 190px 10px 0; }
.vscroll span { display: block; width: 16px; height: 730px; border-radius: 8px; background: #a4a4a2; }
.hscroll { padding: 18px 0 0 154px; }
.hscroll span { display: block; width: 1254px; height: 16px; border-radius: 8px; background: #a4a4a2; }
.grip { width: 24px; display: flex; flex-direction: column; align-items: center; justify-content: center; gap: 4px; flex: none; }
.grip span { width: 5px; height: 5px; border-radius: 50%; background: #ececec; }

/* dock */
.dock { width: 614px; height: 1284px; margin-top: 10px; background: #2e2e2e; flex: none; display: flex; flex-direction: column; }
.tabs { display: flex; height: 74px; background: #272727; border-bottom: 2px solid #1b1b1b; flex: none; }
.tab { display: flex; align-items: center; height: 74px; padding-bottom: 4px; }
.tab svg { width: 32px; height: 32px; }
.export { width: 146px; padding: 0 2px 6px 0; justify-content: center; }
.current { width: 276px; padding: 2px 0 0 24px; background: #2e2e2e; border-bottom: 8px solid #15539e; white-space: nowrap; }
.current svg { margin-right: 4px; }
.tab .close { width: 17px; height: 17px; margin: 2px 0 0 14px; }
.tab-menu { width: 60px; height: 60px; margin: 6px 2px 0 0; border-radius: 10px; background: #2e2e2e; display: flex; align-items: center; justify-content: center; }
.tab-menu svg { width: 24px; height: 16px; }
.pane { height: 980px; margin: 4px 2px 0; border: 2px solid #1b1b1b; flex: none; }
.subtabs { display: flex; height: 54px; background: #272727; border-bottom: 2px solid #1b1b1b; padding-left: 14px; }
.sub { display: flex; align-items: center; gap: 11px; height: 56px; padding-bottom: 4px; }
.sub svg { width: 26px; height: 26px; }
.now { width: 100px; padding: 4px 0 0 17px; border-bottom: 8px solid #15539e; }
.paint { margin-left: 33px; width: 214px; }
.paints { display: flex; padding: 8px 0 0 8px; }
.paints i { width: 56px; height: 56px; display: flex; align-items: center; justify-content: center; }
.paints i > svg { width: 32px; height: 32px; }
.rule { border: 2px solid #1b1b1b; border-radius: 10px; background: #272727; }
.pane h2 { margin: 6px 0 0 16px; font: bold 24px/28px "Liberation Sans", Arial, sans-serif; letter-spacing: -.2px; }
.blend { display: flex; align-items: center; justify-content: flex-end; height: 68px; margin: 6px 6px 6px 0; color: #8e8e8e; line-height: 24px; flex: none; }
.blend > span:first-child { padding-bottom: 3px; letter-spacing: .2px; }
.select { width: 218px; height: 68px; padding: 0 22px 4px 22px; border: 2px solid #1b1b1b; border-radius: 11px; background: #313131; display: flex; align-items: center; justify-content: space-between; color: #929292; }
.slider { display: flex; width: 594px; height: 64px; margin: 0 0 8px 10px; border: 2px solid #1b1b1b; border-radius: 9px; background: #313131; line-height: 56px; overflow: hidden; flex: none; }
.slider span { width: 448px; padding-left: 8px; border-right: 2px solid #1b1b1b; }
.slider em { flex: 1; padding-left: 12px; }
.slider:not(.dim) { color: #fff; }

/* palette */
.palette { display: flex; height: 58px; padding: 2px 3px 0 2px; justify-content: space-between; flex: none; }
.swatches { display: flex; gap: 2px; padding-top: 22px; }
.swatches > * { width: 32px; height: 32px; flex: none; }
.none { background: #fff; }
.menu { width: 56px; height: 56px; flex-direction: column; gap: 4px; }
.menu b { width: 46px; height: 6px; background: #ececec; border-top: 1px solid #111; }

/* status bar */
.status { display: flex; height: 70px; padding-top: 2px; flex: none; white-space: nowrap; }
.status dl { margin: 0; display: grid; grid-template-columns: 80px 160px; column-gap: 62px; grid-auto-rows: 34px; width: 300px; align-content: start; line-height: 32px; }
.status dt { text-align: right; }
.status dd { margin: 0; }
.status label { line-height: 64px; }
.lo { width: 28px; }
.opacity { width: 144px; }
.opacity em, .zoom em { line-height: 60px; }
.layer { width: 142px; height: 26px; margin: 20px 0 0 50px; padding-left: 12px; border-left: 6px solid #3d85f0; line-height: 24px; }
.eye { width: 32px; height: 32px; margin: 17px 0 0 -2px; }
.layer-lock { width: 32px; height: 32px; margin: 18px 0 0 43px; }
.line { width: 2px; height: 44px; margin: 12px 0 0 17px; background: #2e2e2e; }
.hint { margin: 0 0 0 14px; width: 1114px; line-height: 64px; letter-spacing: .1px; }
.status .line.tall { height: 52px; margin: 0; }
.status .coords { grid-template-columns: 30px 90px; column-gap: 18px; grid-auto-rows: 26px; width: 145px; padding-left: 19px; line-height: 24px; letter-spacing: .2px; }
.coords dt { text-align: left; }
.lz { margin-left: 19px; width: 21px; }
.zoom { width: 188px; margin-right: 44px; background: #2e2e2e; }
.zoom em { padding-left: 20px; color: #fff; }
.rotate { width: 202px; background: #2e2e2e; }
.zoom u, .rotate u { width: 42px; }

/* floating window preview */
.preview { position: absolute; left: 2264px; top: 1400px; width: 272px; height: 176px; padding: 8px; border-radius: 6px; background: #000; box-shadow: 0 4px 40px rgba(0, 0, 0, .3); }
.mini { fill: none; stroke: #a8a8a8; stroke-width: 13; }
```
FILE: script.js
```js
const NS = 'http://www.w3.org/2000/svg';
const add = (parent, name, attrs, text) => {
  const el = document.createElementNS(NS, name);
  for (const key in attrs) el.setAttribute(key, attrs[key]);
  if (text !== undefined) el.textContent = text;
  parent.appendChild(el);
};

// Rulers: one tick each 25 mm, longer each 125 mm, labelled each 250 mm.
const across = document.getElementById('ruler-h');
for (let k = -18; k <= 30; k++) {
  const x = Math.floor(653.6 + k * 36.53);
  if (x < 0 || x > 1760) continue;
  const top = k % 10 === 0 ? 0 : k % 5 === 0 ? 24 : 36;
  add(across, 'rect', { x, y: top, width: 2, height: 50 - top });
  if (k % 10 === 0 && k < 30) add(across, 'text', { x: x + 9, y: 16 }, k * 25);
}
add(across, 'rect', { x: 0, y: 50, width: 1762, height: 2 });
add(across, 'path', { d: 'M1444 42H1463L1453.5 52Z' });

const down = document.getElementById('ruler-v');
for (let k = -8; k <= 25; k++) {
  const y = Math.floor(306.2 + k * 36.45);
  if (y < 8 || y > 1196) continue;
  const left = k % 10 === 0 ? 0 : k % 5 === 0 ? 20 : 30;
  add(down, 'rect', { x: left, y, width: 42 - left, height: 2 });
  if (k % 10 === 0) String(k * 25).split('').forEach((digit, n) =>
    add(down, 'text', { x: 14, y: y + 19 + n * 18 }, digit));
}
add(down, 'rect', { x: 42, y: 0, width: 2, height: 1200 });
add(down, 'path', { d: 'M34 1092V1111L44 1101.5Z' });

const colors = ('000000 1a1a1a 333333 4d4d4d 666666 808080 999999 b3b3b3 cccccc e6e6e6 ececec f2f2f2 f9f9f9 ffffff ' +
  '800000 ff0000 808000 ffff00 008000 00ff00 008080 00ffff 000080 0000ff 800080 ff00ff ' +
  '2b0000 550000 800000 aa0000 d40000 ff0000 ff2a2a ff5555 ff8080 ffaaaa ffd5d5 ' +
  '280b0b 501616 782121 a02c2c c83737 d35f5f de8787 e9afaf f4d7d7 ' +
  '241c1c 483737 6c5353 916f6f ac9393 c8b7b7 e3dbdb ' +
  '2b1100 552200 803300 aa4400 d45500 ff6600 ff7f2a ff9955 ffb380 ffccaa ffe6d5 28170b 502d16 784421').split(' ');
const swatches = document.getElementById('swatches');
for (const color of colors) {
  const cell = document.createElement('span');
  cell.style.background = '#' + color;
  swatches.appendChild(cell);
}
```
